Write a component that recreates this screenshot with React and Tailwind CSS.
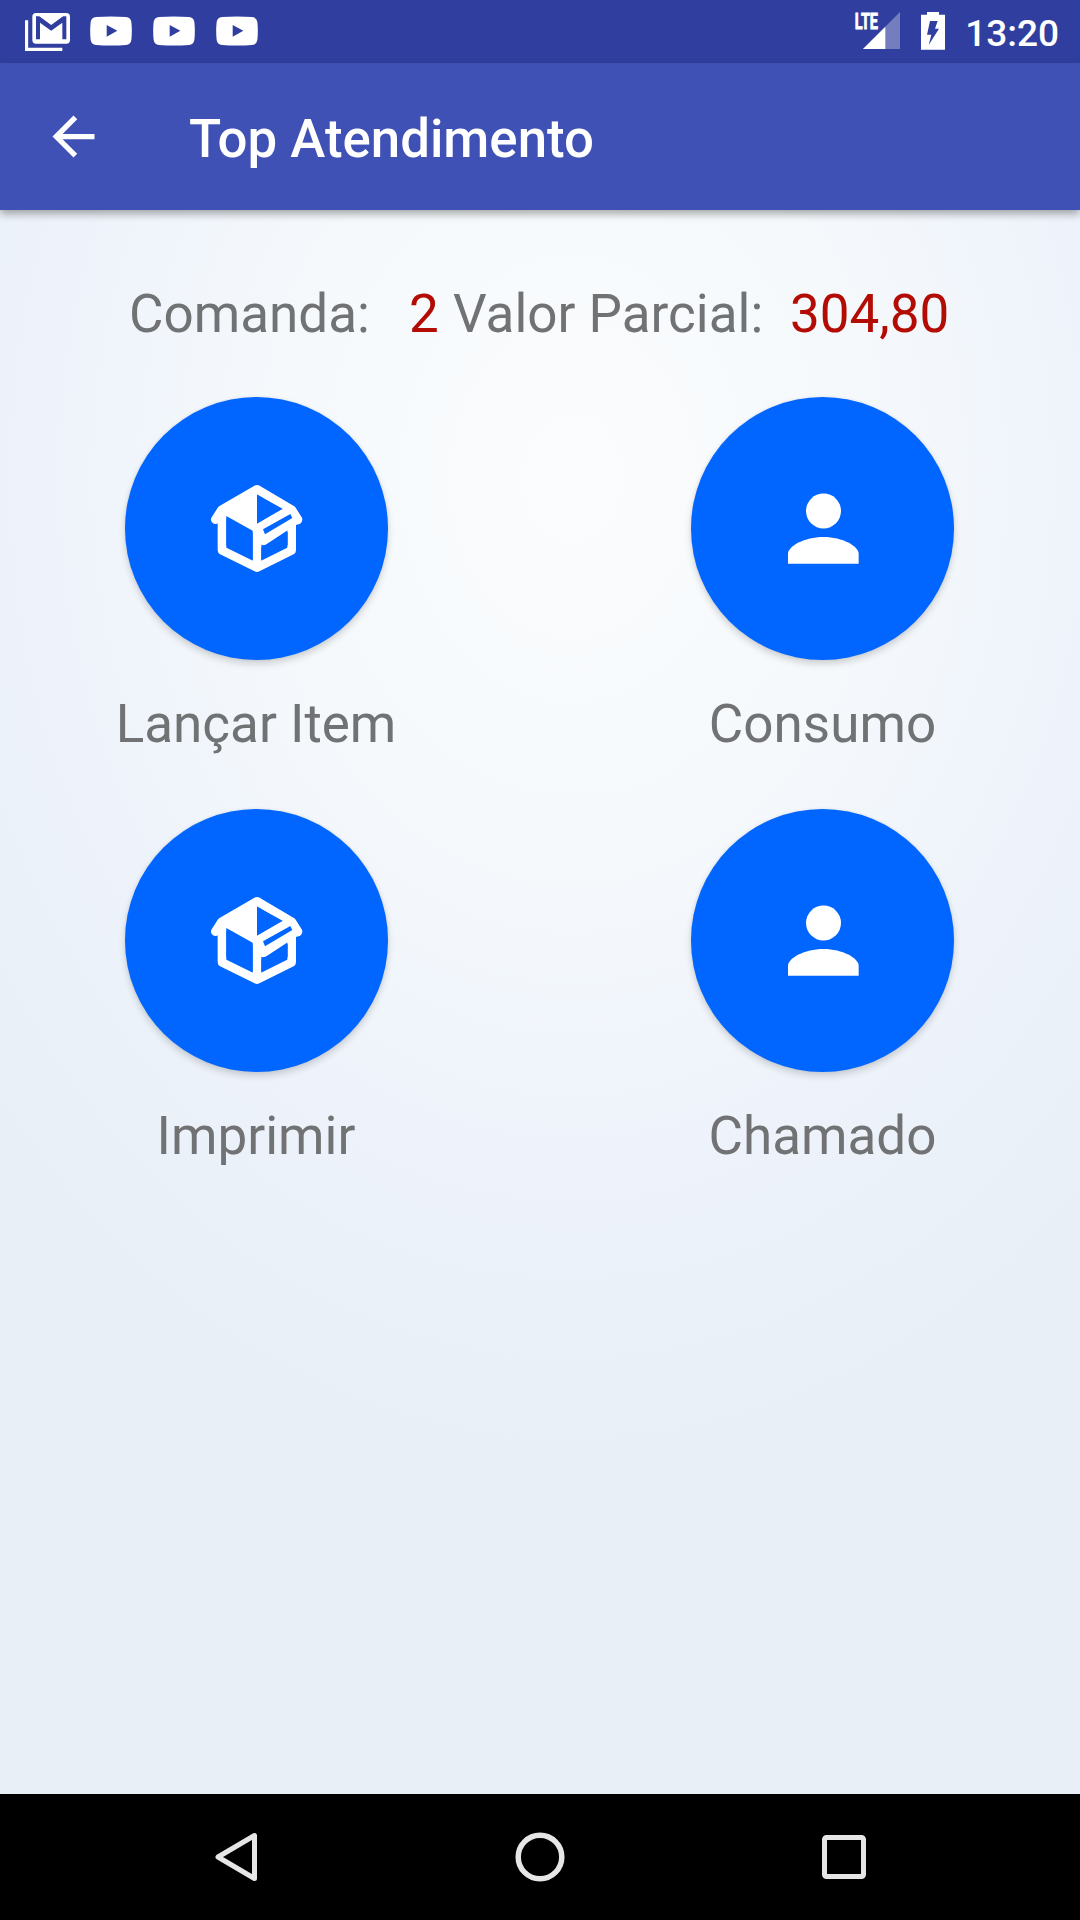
import React from "react";

function GmailIcon() {
  return (
    <svg viewBox="0 0 135 114" className="w-[45px] h-[38px]">
      <path d="M4.500 22V109H112" fill="none" stroke="#fff" strokeWidth="10" />
      <rect x="22" y="0" width="113" height="92" rx="11" fill="#fff" />
      <path d="M33 10H43L78.500 36L114 10H124V79H112V29L78.500 53L45 29V79H33Z" fill="#303f9f" />
      <path d="M43 9L78.500 33L114 9Z" fill="#fff" />
    </svg>
  );
}

function YoutubeIcon() {
  return (
    <svg viewBox="0 0 126 88" className="w-[42px] h-[30px]">
      <path
        d="M18 2Q63 -1 108 2Q122 3 124 17Q127 44 124 71Q122 85 108 86Q63 89 18 86Q4 85 2 71Q-1 44 2 17Q4 3 18 2Z"
        fill="#fff"
      />
      <path d="M50 26V61L82 43.500Z" fill="#303f9f" />
    </svg>
  );
}

function SignalIcon() {
  return (
    <svg viewBox="0 -36 141 150" className="w-[47px] h-[50px]">
      <path d="M138 0V111H27Z" fill="#fff" opacity=".33" />
      <path d="M94 44V111H27Z" fill="#fff" />
      <text
        x="2"
        y="51"
        textLength="70"
        lengthAdjust="spacingAndGlyphs"
        fill="#fff"
        stroke="#fff"
        strokeWidth="2.500"
        fontSize="65"
        fontWeight="700"
        fontFamily="Roboto, sans-serif"
      >
        LTE
      </text>
    </svg>
  );
}

function BatteryIcon() {
  return (
    <svg viewBox="0 0 72 114" className="w-[24px] h-[38px]">
      <path d="M18 0H54V8H72V113H0V8H18Z" fill="#fff" />
      <path d="M27 27H50L42 50H54L23 99L31 68H18Z" fill="#303f9f" />
    </svg>
  );
}

function BackIcon() {
  return (
    <svg viewBox="0 0 24 24" className="size-[63px]" fill="#fff">
      <path d="M20 11H7.830l5.590-5.590L12 4l-8 8 8 8 1.410-1.410L7.830 13H20v-2z" />
    </svg>
  );
}

function BoxIcon() {
  return (
    <svg viewBox="2 -3 390 390" className="size-[130px]">
      <g fill="none" stroke="#fff" strokeWidth="26" strokeLinejoin="round" strokeLinecap="round">
        <path d="M95 138V256L200 308L304 256V138" />
        <path d="M75 164L94 134L200 73L304 134L323 164" />
        <path d="M200 190V308" strokeLinecap="butt" />
      </g>
      <path d="M200 70V210L90 150V134Z" fill="#fff" />
      <path
        d="M200 176L282 128L316 130L334 160Q336 175 325 178L316 180L226 239Q216 243 208 236L188 205Z"
        fill="#fff"
      />
      <path d="M108 153L187 197V284L108 241Z" fill="#0066ff" />
      <path d="M213 248L292 200V241L213 284Z" fill="#0066ff" />
      <path d="M200 90L277 131L200 174Z" fill="#0066ff" />
      <path d="M218 193L300 147L306 159L224 208Z" fill="#0066ff" />
    </svg>
  );
}

function PersonIcon() {
  return (
    <svg viewBox="-9 -3 390 390" className="size-[130px]" fill="#fff">
      <circle cx="187.500" cy="138" r="52.500" />
      <path d="M81 296V266C81 244 130 216 187.500 216S293 244 293 266V296Z" />
    </svg>
  );
}

const actions = [
  { label: "Lançar Item", Icon: BoxIcon },
  { label: "Consumo", Icon: PersonIcon },
  { label: "Imprimir", Icon: BoxIcon },
  { label: "Chamado", Icon: PersonIcon },
];

function ActionButton({ label, Icon }) {
  return (
    <div className="flex flex-col items-center">
      <button
        type="button"
        className="size-[263px] rounded-full bg-[#0066ff] flex items-center justify-center shadow-[0_4px_7px_rgba(0,0,0,0.16),0_0_3px_rgba(0,0,0,0.08)]"
      >
        <Icon />
      </button>
      <span className="mt-[33px] mb-px leading-[62px] whitespace-nowrap">{label}</span>
    </div>
  );
}

function App() {
  return (
    <div className="w-[1080px] h-[1920px] flex flex-col overflow-hidden font-[Roboto,sans-serif]">
      {/* status bar */}
      <div className="h-[63px] shrink-0 bg-[#303f9f] flex items-start justify-between pl-[25px] pr-[21px]">
        <div className="flex items-start gap-[21px] pt-[12.5px]">
          <GmailIcon />
          <div className="flex gap-[21px] pt-[3.5px] -ml-[1.5px]">
            <YoutubeIcon />
            <YoutubeIcon />
            <YoutubeIcon />
          </div>
        </div>
        <div className="flex items-start text-white">
          <SignalIcon />
          <div className="ml-[20px] pt-[12px]">
            <BatteryIcon />
          </div>
          <span className="ml-[20px] pt-[12px] text-[37px] leading-[43px] font-medium">13:20</span>
        </div>
      </div>

      {/* toolbar */}
      <header className="relative h-[147px] shrink-0 bg-[#3f51b5] flex items-center pl-[42px] shadow-[0_4px_8px_rgba(0,0,0,0.33)]">
        <BackIcon />
        <h1 className="ml-[84px] pt-[4px] text-[52.8px] leading-[62px] font-medium text-white">
          Top Atendimento
        </h1>
      </header>

      <main className="flex-1 bg-[#e8eff7] bg-[radial-gradient(ellipse_780px_1000px_at_53%_17%,#fbfcfd_0%,#f5f9fc_38%,#eef3fb_68%,#e8eff7_100%)] text-[53px] text-[#707274]">
        <div className="flex pt-[73px] pl-[129px] leading-[62px] whitespace-pre">
          <span className="w-[280px]">Comanda:</span>
          <span className="w-[44px] text-[#b30c04]">2</span>
          <span className="w-[337px]">Valor Parcial:</span>
          <span className="text-[#b30c04]">304,80</span>
        </div>
        <div className="grid grid-cols-[276px_276px] justify-between pl-[118px] pr-[119.5px] mt-[52px] gap-y-[53px]">
          {actions.map((action) => (
            <ActionButton key={action.label} label={action.label} Icon={action.Icon} />
          ))}
        </div>
      </main>

      {/* navigation bar */}
      <nav className="h-[126px] shrink-0 bg-black flex items-center justify-between pl-[214px] pr-[213px]">
        <svg viewBox="0 0 44 50" className="w-[44px] h-[50px]">
          <path
            d="M40.500 3.500V46.500L4 25Z"
            fill="none"
            stroke="#e6e6e6"
            strokeWidth="5"
            strokeLinejoin="round"
          />
        </svg>
        <svg viewBox="0 0 50 50" className="w-[50px] h-[50px]">
          <circle cx="25" cy="25" r="21.800" fill="none" stroke="#e6e6e6" strokeWidth="5.500" />
        </svg>
        <svg viewBox="0 0 46 46" className="w-[46px] h-[46px]">
          <rect x="3.500" y="3.500" width="39" height="39" rx="2" fill="none" stroke="#e6e6e6" strokeWidth="5" />
        </svg>
      </nav>
    </div>
  );
}

export default App;
